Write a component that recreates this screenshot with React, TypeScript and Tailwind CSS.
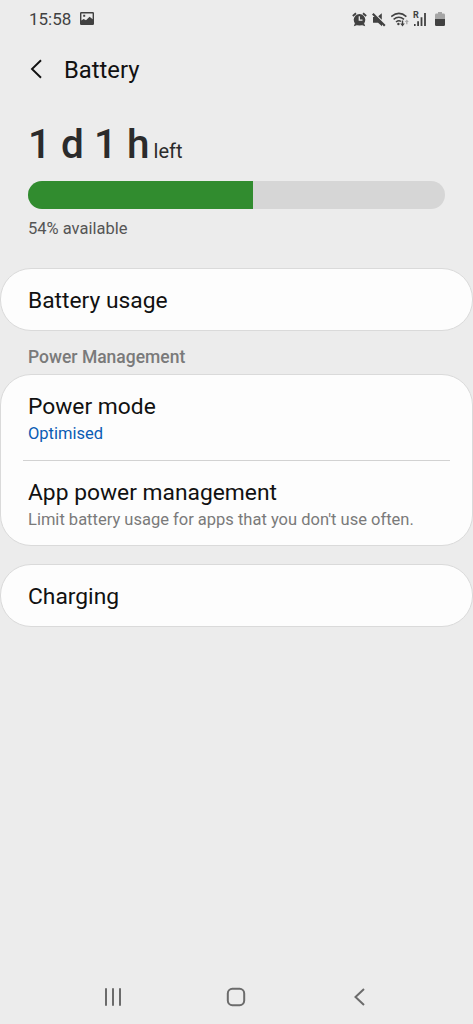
import type { ReactNode } from 'react';

const battery = {
  percent: 54,
  days: 1,
  hours: 1,
};

function StatusBar() {
  return (
    <div className="flex h-10 items-center justify-between pb-[2px] pl-[29px] pr-[28px] text-[#414141]">
      <div className="flex items-center gap-[9px]">
        <span className="text-[17px] leading-5">15:58</span>
        <svg className="mb-[2px] h-[13px] w-[14px]" viewBox="0 0 14 13">
          <path
            fill="currentColor"
            fillRule="evenodd"
            d="M1.2 0h11.6Q14 0 14 1.2v10.6Q14 13 12.8 13H1.2Q0 13 0 11.8V1.2Q0 0 1.2 0ZM1.4 1.4v7.2l2.2-1.6 2.4 1.3 3.6-3.6 3 2.6V1.4ZM3.2 2.8h2v2h-2Z"
          />
        </svg>
      </div>
      <div className="flex h-[16px] items-end">
        <svg className="h-[15px] w-[15px]" viewBox="0 0 15 15">
          <path fill="none" stroke="currentColor" strokeWidth="1.8" d="M.8 4 4 1.2M14.2 4 11 1.2" />
          <circle cx="7.5" cy="7.8" r="5.8" fill="currentColor" />
          <path fill="currentColor" d="m1.8 14.2 1.2-3.2 2.4 2ZM13.2 14.2 12 11l-2.4 2Z" />
          <path fill="none" stroke="#ececec" strokeWidth="1.3" d="M7.3 4.3v3.9h3.2" />
        </svg>
        <svg className="ml-[5px] h-[15px] w-[14px]" viewBox="0 0 14 15">
          <path fill="currentColor" d="M1 5h3.8l5.2 5.2v4L6 10.8H1ZM6.2 4.2l3.6-3v6.6Z" />
          <path fill="none" stroke="currentColor" strokeWidth="2.2" d="m.8 1.7 12 12" />
        </svg>
        <svg className="ml-[5px] h-[15px] w-[18px]" viewBox="0 0 18 15">
          <g fill="none" stroke="currentColor" strokeWidth="1.5">
            <path d="M.2 4.6Q8-1.8 15.4 4.6" />
            <path d="M2.6 7.4q5.2-4.2 10.4 0" />
            <path d="M5 10q2.8-2.3 5-.5" />
          </g>
          <circle cx="7.4" cy="12" r="1.2" fill="currentColor" />
          <path fill="currentColor" d="M10.8 8.5h1.4v3h1.6l-2.3 3-2.3-3h1.6Z" />
          <path fill="#a8a8a8" d="m15.8 7.6 2 2.5h-1.3v2.2h-1.4v-2.2h-1.3Z" />
        </svg>
        <div className="relative ml-[4px] h-[15px] w-[14px]">
          <span className="absolute left-0 top-[-1px] text-[9px] font-bold leading-[9px]">R</span>
          <svg className="h-[15px] w-[14px]" viewBox="0 0 14 15">
            <path fill="currentColor" d="M1 12h1.6v2H1ZM4.2 9.2H6V14H4.2ZM7.6 5.3h1.8V14H7.6ZM11.1 1h1.8v13h-1.8Z" />
          </svg>
        </div>
        <svg className="ml-[8px] h-[15px] w-[10px]" viewBox="0 0 10 15">
          <path fill="#a5a5a5" d="M3 0h4v1.6h1.6Q10 1.6 10 3v4H0V3q0-1.4 1.4-1.4H3Z" />
          <path fill="currentColor" d="M0 7h10v5.8q0 1.2-1.2 1.2H1.2Q0 14 0 12.8Z" />
        </svg>
      </div>
    </div>
  );
}

function Card({ children }: { children: ReactNode }) {
  return (
    <div className="rounded-[31px] border border-[#dadada] bg-[#fdfdfd]">{children}</div>
  );
}

function Row({ title }: { title: string }) {
  return (
    <div className="flex h-[61px] items-center pl-[27px] pt-[3px]">
      <span className="text-[22.8px] leading-7 text-[#111111]">{title}</span>
    </div>
  );
}

export default function App() {
  return (
    <div className="flex min-h-screen w-full flex-col bg-[#ececec] font-['Roboto',sans-serif]">
      <StatusBar />

      <header className="flex h-[60px] items-center pl-[30px] text-[#111111]">
        <svg className="mb-[2px] h-[20px] w-[13px]" viewBox="0 0 13 20">
          <path d="M11 1.2 2 10l9 8.8" fill="none" stroke="currentColor" strokeWidth="1.9" />
        </svg>
        <h1 className="ml-[21px] text-[23.8px] leading-8">Battery</h1>
      </header>

      <section className="px-7 pt-[19px]">
        <div className="flex h-[50px] items-baseline text-[#2b2b2b]">
          <span className="text-[40.5px] font-medium leading-[50px] tracking-[-1px] [word-spacing:2px]">
            {battery.days} d {battery.hours} h
          </span>
          <span className="ml-[5px] text-[20px]">left</span>
        </div>
        <div className="mt-[12px] h-7 overflow-hidden rounded-full bg-[#d6d6d6]">
          <div className="h-full bg-[#318c2f]" style={{ width: `${battery.percent}%` }} />
        </div>
        <p className="mt-[10px] text-[16.5px] leading-5 text-[#555555]">{battery.percent}% available</p>
      </section>

      <main className="mt-[29px]">
        <Card>
          <Row title="Battery usage" />
        </Card>

        <h2 className="flex h-[43px] items-center pl-7 pt-[10px] text-[17.5px] font-medium text-[#7a7a7a]">
          Power Management
        </h2>

        <Card>
          <div className="flex h-[85px] flex-col pl-[27px] pt-[18px]">
            <span className="text-[22.8px] leading-7 text-[#111111]">Power mode</span>
            <span className="mt-[3px] text-[16.5px] leading-5 text-[#0a5cb4]">Optimised</span>
          </div>
          <div className="mx-[22px] h-px bg-[#d2d2d2]" />
          <div className="flex h-[84px] flex-col pl-[27px] pt-[18px]">
            <span className="text-[22.8px] leading-7 text-[#111111]">App power management</span>
            <span className="mt-[3px] text-[16.5px] leading-5 text-[#7a7a7a]">
              Limit battery usage for apps that you don't use often.
            </span>
          </div>
        </Card>

        <div className="mt-[18px]">
          <Card>
            <Row title="Charging" />
          </Card>
        </div>
      </main>

      <nav className="mt-auto flex h-[54px] items-center pl-[104px] text-[#6b6b6b]">
        <svg className="h-[20px] w-[18px]" viewBox="0 0 18 20">
          <path
            d="M2 2v16M9 2v16M16 2v16"
            fill="none"
            stroke="currentColor"
            strokeWidth="2"
            strokeLinecap="round"
          />
        </svg>
        <svg className="ml-[104px] h-[20px] w-[20px]" viewBox="0 0 20 20">
          <rect x="1.8" y="1.8" width="16.4" height="16.4" rx="4.6" fill="none" stroke="currentColor" strokeWidth="2" />
        </svg>
        <svg className="ml-[107px] h-[20px] w-[13px]" viewBox="0 0 13 20">
          <path d="M11 2 2.5 10l8.5 8" fill="none" stroke="currentColor" strokeWidth="2" />
        </svg>
      </nav>
    </div>
  );
}
